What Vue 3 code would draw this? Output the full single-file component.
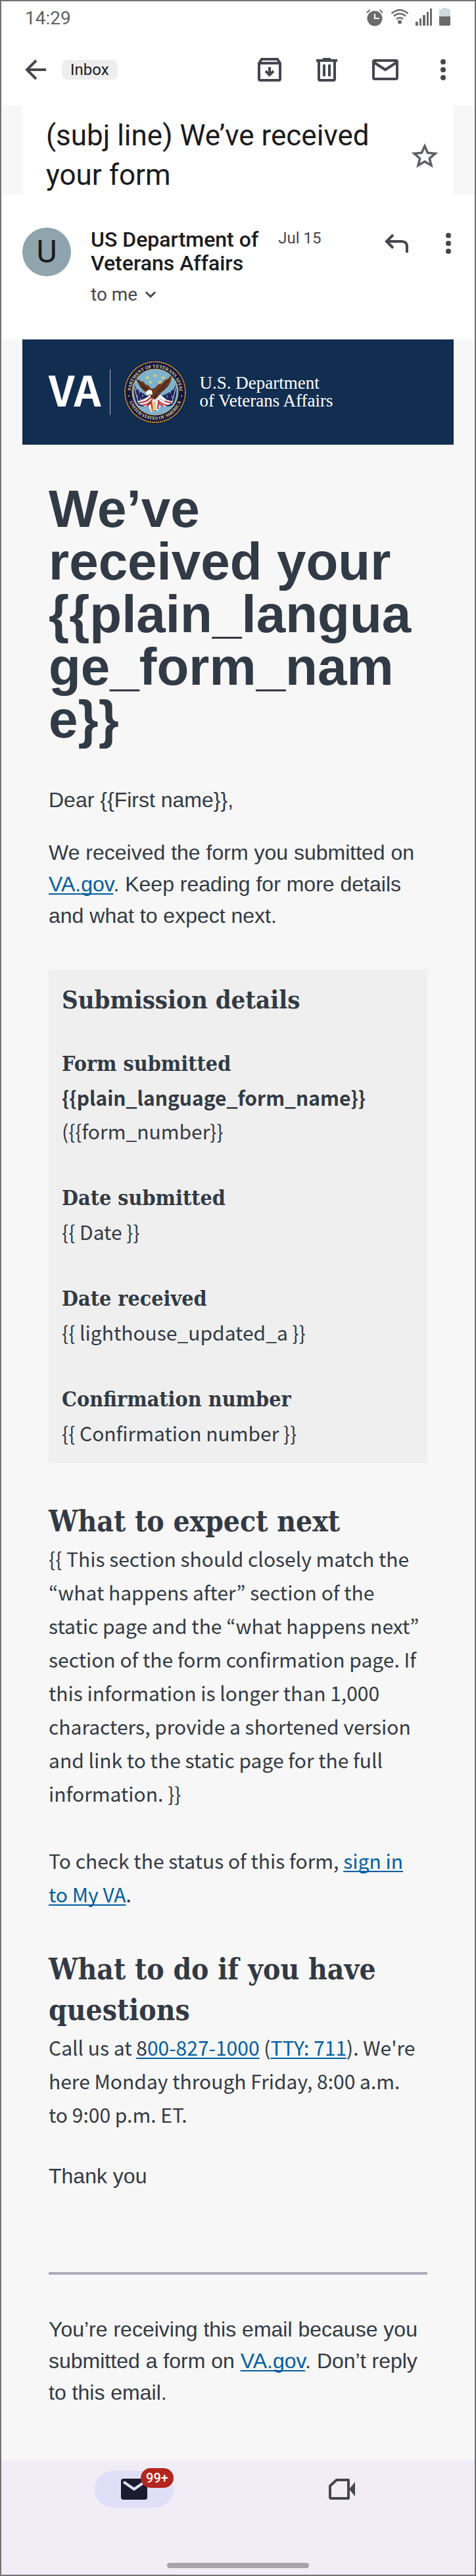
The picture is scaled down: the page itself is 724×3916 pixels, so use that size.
<script setup>
const details = [
  { label: 'Date submitted', value: '{{ Date }}' },
  { label: 'Date received', value: '{{ lighthouse_updated_a }}' },
  { label: 'Confirmation number', value: '{{ Confirmation number }}' },
]
const stars = [[48, 24], [36, 27], [60, 27], [41, 34], [55, 34]]
const starPath = 'M0-4 1-1.2H4L1.6.6 2.5 3.5 0 1.7-2.5 3.5-1.6.6-4-1.2H-1Z'
</script>

<template>
  <div class="screen">
    <header class="status">
      <span>14:29</span>
      <div class="status-icons">
        <svg width="28" height="28" viewBox="0 0 28 28" aria-hidden="true">
          <circle cx="14" cy="16" r="11.5" fill="#6b6b6b" />
          <path d="M2 7.5 6.500 3M26 7.500 21.500 3" stroke="#6b6b6b" stroke-width="2" />
          <path d="M14 9v7h7" fill="none" stroke="#fff" stroke-width="2" />
        </svg>
        <svg width="28" height="28" viewBox="0 0 28 28" fill="none" stroke="#6b6b6b" stroke-width="2.500" aria-hidden="true">
          <path d="M1.500 8.500Q14-2 26.500 8.500M5 12.500q9-7.500 18 0M9 17q5-4 10 0" />
          <circle cx="14" cy="21.500" r="3" fill="#6b6b6b" stroke="none" />
        </svg>
        <svg width="26" height="28" viewBox="0 0 26 28" fill="#6b6b6b" aria-hidden="true">
          <path d="M0 21h4v6H0zM6 16h3v11H6zM11 11h4v16h-4zM17 6h3v21h-3zM22 1h3v26h-3z" />
        </svg>
        <svg width="18" height="28" viewBox="0 0 18 28" aria-hidden="true">
          <path d="M0 2h5V0h7v2h5v12H0z" fill="#cfd8df" />
          <path d="M0 13h17v13l-1 1H1l-1-1z" fill="#6b6b6b" />
        </svg>
      </div>
    </header>

    <nav class="toolbar" aria-label="Message actions">
      <div class="group">
        <button type="button" aria-label="Back">
          <svg width="32" height="32" viewBox="0 0 32 32" fill="none" stroke="#46464f" stroke-width="4"><path d="M17 2 3 16l14 14M3 16h29" /></svg>
        </button>
        <span class="chip">Inbox</span>
      </div>
      <div class="group actions">
        <button type="button" aria-label="Archive">
          <svg width="36" height="36" viewBox="0 0 36 36" fill="none" stroke="#46464f" stroke-width="4"><path d="M2 8v24q0 2 2 2h28q2 0 2-2V8l-4-6H6zM2 8h32M18 14v12M12 20l6 6 6-6" /></svg>
        </button>
        <button type="button" aria-label="Delete">
          <svg width="32" height="36" viewBox="0 0 32 36" fill="none" stroke="#46464f" stroke-width="4"><path d="M0 4h32M10 2h12M4 4v28q0 2 2 2h20q2 0 2-2V4M12 10v18M20 10v18" /></svg>
        </button>
        <button type="button" aria-label="Mark unread">
          <svg width="40" height="32" viewBox="0 0 40 32" fill="none" stroke="#46464f" stroke-width="4"><rect x="2" y="2" width="36" height="28" rx="2" /><path d="m3 5 17 11L37 5" /></svg>
        </button>
        <button type="button" class="more" aria-label="More">
          <svg width="8" height="32" viewBox="0 0 8 32" fill="#46464f"><circle cx="4" cy="4" r="4" /><circle cx="4" cy="16" r="4" /><circle cx="4" cy="28" r="4" /></svg>
        </button>
      </div>
    </nav>

    <div class="subject-row">
      <div class="subject">
        <h1>(subj line) We’ve received your form</h1>
        <button type="button" aria-label="Star">
          <svg width="40" height="38" viewBox="0 0 40 38" fill="none" stroke="#5f6064" stroke-width="3.500"><path d="m20 5 4.500 10.300 11.500 1-8.700 7.500L30 34.500l-10-6-10 6 2.700-10.700L4 16.300l11.500-1z" /></svg>
        </button>
      </div>
    </div>

    <section class="sender">
      <div class="avatar" aria-hidden="true">U</div>
      <div class="sender-info">
        <div class="sender-line">
          <strong>US Department of<br />Veterans Affairs</strong>
          <time>Jul 15</time>
        </div>
        <button type="button" class="recipient">
          to me
          <svg width="16" height="12" viewBox="0 0 16 12" fill="none" stroke="#46464f" stroke-width="3"><path d="m1 2 7 7 7-7" /></svg>
        </button>
      </div>
      <div class="sender-actions">
        <button type="button" aria-label="Reply">
          <svg width="38" height="32" viewBox="0 0 38 32" fill="none" stroke="#46464f" stroke-width="4"><path d="M14 3 4 13l10 10M4 13h23q8 0 8 8v9" /></svg>
        </button>
        <button type="button" aria-label="More message options">
          <svg width="8" height="32" viewBox="0 0 8 32" fill="#46464f"><circle cx="4" cy="4" r="4" /><circle cx="4" cy="16" r="4" /><circle cx="4" cy="28" r="4" /></svg>
        </button>
      </div>
    </section>

    <main class="message">
      <div class="banner">
        <span class="va">VA</span>
        <svg class="seal" width="98" height="98" viewBox="0 0 98 98" role="img" aria-label="Department of Veterans Affairs seal">
          <defs>
            <path id="ring-top" d="M12 49a37 37 0 0 1 74 0" />
            <path id="ring-bottom" d="M7 49a42 42 0 0 0 84 0" />
          </defs>
          <circle cx="49" cy="49" r="48" fill="#15163f" />
          <circle cx="49" cy="49" r="46" fill="none" stroke="#d9a93d" stroke-width="2" stroke-dasharray="2 1" />
          <circle cx="49" cy="49" r="35" fill="#7db2cf" stroke="#d9b45a" />
          <g font-family="Liberation Serif, serif" font-size="7" font-weight="700" fill="#e6d98c" text-anchor="middle">
            <text><textPath href="#ring-top" startOffset="50%">DEPARTMENT OF VETERANS AFFAIRS</textPath></text>
            <text><textPath href="#ring-bottom" startOffset="50%">UNITED STATES OF AMERICA</textPath></text>
          </g>
          <circle cx="9" cy="55" r="1" fill="#e6d98c" /><circle cx="89" cy="55" r="1" fill="#e6d98c" />
          <path v-for="(s, i) in stars" :key="i" :d="starPath" :transform="`translate(${s[0] + 1} ${s[1]}) scale(.8)`" fill="#f1d34c" />
          <path d="M17 37c4 10 13 15 26 19l-5 13q-12 5-17-3-6-12-4-29zM81 37c-4 10-13 15-26 19l5 13q12 5 17-3 6-12 4-29z" fill="#20265d" />
          <path d="M16 37l8 30M82 37l-8 30" stroke="#d8dde3" />
          <path d="M20 43v4M25 48v4M30 53v4M22 54v3M27 58v3M77 43v4M72 48v4M67 54v4M75 55v3M69 61v3" stroke="#dfe5f2" stroke-width="1.500" stroke-dasharray="1 1" />
          <path d="M22 63q12-3 20-10l7 8 7-8q8 9 20 10-7 9-19 8l-4 7-5-3-5 5-4-9q-11 1-17-8z" fill="#f1edea" />
          <path d="M24 65q13 0 19-9M28 69q11 0 17-9M73 65q-12-1-18-9M69 69q-10 0-16-8M43 64l2 14M49 65v13M54 64l-1 11M36 71l8-7M61 71l-8-6" fill="none" stroke="#b42a39" stroke-width="2" />
          <path d="M41 51q-13-1-22-24 3 4 5 3 2 3 7 3l3 4 5 2 4 5 5-1 6-6 5-1 4-5 5-2 6-6q1 15-16 27l-8 10-7-1z" fill="#6f3a22" />
          <path d="M23 32l17 15M27 40l14 9M70 31L52 48M68 39L53 50M46 52l3 8M51 50l-1 8" stroke="#3d2118" stroke-width="1.500" />
          <path d="M35 49q4-6 9-2l1 6-6-1-3 3z" fill="#fff" />
          <path d="m35 50-2 4 3-1" fill="#f0b63b" />
          <path d="M57 53l10 8-5 2-8-6zM50 58l4 2-4 4z" fill="#e8eff5" />
          <path d="M46 64v15M49 63v14" stroke="#efc33e" stroke-width="2" />
        </svg>
        <span class="agency">U.S. Department<br />of Veterans Affairs</span>
      </div>

      <article class="body">
        <h2 class="title">We’ve<br />received your <span v-text="'{{plain_language_form_name}}'" /></h2>
        <p class="arial">Dear <span v-text="'{{First name}}'" />,</p>
        <p class="arial intro">We received the form you submitted on <a href="#">VA.gov</a>. Keep reading for more details and what to expect next.</p>

        <section class="card">
          <h3>Submission details</h3>
          <dl>
            <div>
              <dt>Form submitted</dt>
              <dd><b v-text="'{{plain_language_form_name}}'" /></dd>
              <dd v-text="'({{form_number}}'" />
            </div>
            <div v-for="d in details" :key="d.label">
              <dt>{{ d.label }}</dt>
              <dd>{{ d.value }}</dd>
            </div>
          </dl>
        </section>

        <section class="block">
          <h2>What to expect next</h2>
          <p><span v-text="'{{'" /> This section should closely match the “what happens after” section of the static page and the “what happens next” section of the form confirmation page. If this information is longer than 1,000 characters, provide a shortened version and link to the static page for the full information. <span v-text="'}}'" /></p>
          <p class="spaced">To check the status of this form, <a href="#">sign in<br />to My VA</a>.</p>
        </section>

        <section class="block">
          <h2>What to do if you have questions</h2>
          <p>Call us at <a href="#"><span class="ink">8</span>00-827-1000</a> (<a href="#">TTY: 711</a>). We're here Monday through Friday, 8:00 a.m.<br />to 9:00 p.m. ET.</p>
        </section>

        <p class="arial thanks">Thank you</p>
        <hr />
        <p class="arial">You’re receiving this email because you submitted a form on <a href="#">VA.gov</a>. Don’t reply to this email.</p>
      </article>
    </main>

    <footer class="tabs">
      <nav aria-label="Apps">
        <button type="button" class="tab active" aria-label="Mail, 99+ unread">
          <svg width="40" height="32" viewBox="0 0 40 32"><rect width="40" height="32" rx="4" fill="#1a1b2c" /><path d="m4 5 16 11L36 5" fill="none" stroke="#e1dff7" stroke-width="4" /></svg>
          <span class="badge">99+</span>
        </button>
        <button type="button" class="tab" aria-label="Meet">
          <svg width="40" height="32" viewBox="0 0 40 32"><path d="M12 2h18v28H4q-2 0-2-2V11z" fill="none" stroke="#46464f" stroke-width="4" stroke-linejoin="round" /><path d="m31 16 9-11v22z" fill="#46464f" /></svg>
        </button>
      </nav>
      <div class="home" />
    </footer>
  </div>
</template>

<style>
body { margin: 0; }
</style>

<style scoped>
.screen { box-sizing: border-box; border: 2px solid #737373; background: #fff; font-family: Roboto, "Liberation Sans", sans-serif; color: #1b1b1f; }
h1, h2, h3, p, dl, dd { margin: 0; }
button { border: 0; padding: 0; background: none; font: inherit; color: inherit; display: flex; align-items: center; }
svg { display: block; flex: none; }
.status { display: flex; justify-content: space-between; align-items: flex-start; padding: 10px 36px 0; font-size: 28px; line-height: 32px; color: #616161; }
.status-icons { display: flex; gap: 10px; }
.toolbar { display: flex; justify-content: space-between; align-items: center; padding: 44px 44px 36px 36px; }
.group { display: flex; align-items: center; gap: 24px; }
.actions { gap: 53px; }
.more { margin-left: 11px; }
.chip { padding: 1px 13px; background: #eee; border-radius: 8px; font-size: 24px; line-height: 28px; }
.subject-row { background: #f7f7f7; padding: 0 32px; }
.subject { display: flex; justify-content: space-between; align-items: center; background: #fff; padding: 16px 24px 0 36px; }
.subject h1 { font-size: 44px; line-height: 60px; font-weight: 400; max-width: 530px; }
.sender { display: flex; align-items: flex-start; padding: 50px 36px 52px 32px; }
.avatar { width: 74px; height: 74px; border-radius: 50%; background: #8fa4ad; font-size: 48px; line-height: 74px; text-align: center; margin-right: 30px; }
.sender-info { flex: 1; }
.sender-line { display: flex; gap: 30px; }
.sender-line strong { font-size: 32px; line-height: 36px; font-weight: 500; }
.sender-line time { font-size: 24px; line-height: 32px; color: #46464f; }
.recipient { gap: 12px; margin-top: 14px; font-size: 28px; line-height: 32px; color: #46464f; }
.sender-actions { display: flex; gap: 56px; padding-top: 8px; }
.message { background: #f7f7f7; padding: 0 32px; }
.banner { background: #112e51; height: 160px; display: flex; align-items: center; padding: 0 40px; color: #fff; }
.va { font: 700 64px/58px "Noto Sans CJK KR", sans-serif; padding: 0 14px 12px 0; border-right: 1px solid #a9b5c4; }
.seal { margin: 0 18px 0 19px; }
.agency { font: 400 27px/27px "Liberation Serif", serif; }
.body { padding: 58px 40px 79px; color: #323a45; font: 400 30px/51px "Noto Sans CJK KR", sans-serif; }
.title { font: 700 80px/80px "Liberation Sans", Arial, sans-serif; overflow-wrap: anywhere; padding-right: 16px; margin-bottom: 58px; }
.arial { font: 400 32px/48px "Liberation Sans", Arial, sans-serif; }
.intro { margin: 32px 0 58px; }
a { color: #005ea2; text-decoration: underline; text-decoration-thickness: 2px; text-underline-offset: 3px; text-decoration-skip-ink: none; }
.ink { color: #323a45; }
.card { background: #efefef; padding: 20px; }
h3, dt, .block h2 { font-family: "DejaVu Serif Condensed", "DejaVu Serif", serif; font-weight: 700; }
h3 { font-size: 38px; line-height: 52px; }
dl { display: grid; gap: 51px; margin: 46px 0 0; }
dt { font-size: 32px; }
.block { margin-top: 58px; }
.block h2 { font-size: 44px; line-height: 62px; }
.spaced { margin-top: 51px; }
.thanks { margin-top: 44px; }
hr { border: 0; height: 4px; background: #a9aeb7; margin: 122px 0 59px; }
.tabs { background: #f0edf7; padding: 16px 0 10px; }
.tabs nav { display: grid; grid-template-columns: 1fr 1fr; justify-items: center; padding: 0 44px; margin-bottom: 84px; }
.tab { position: relative; width: 120px; height: 56px; justify-content: center; border-radius: 28px; }
.active { background: #e1dff7; }
.badge { position: absolute; top: -4px; right: 0; width: 50px; border-radius: 15px; background: #b3261e; color: #fff; font-size: 20px; line-height: 30px; text-align: center; font-weight: 500; }
.home { width: 30%; height: 8px; border-radius: 4px; margin: 0 auto; background: #a6a4aa; }
</style>
